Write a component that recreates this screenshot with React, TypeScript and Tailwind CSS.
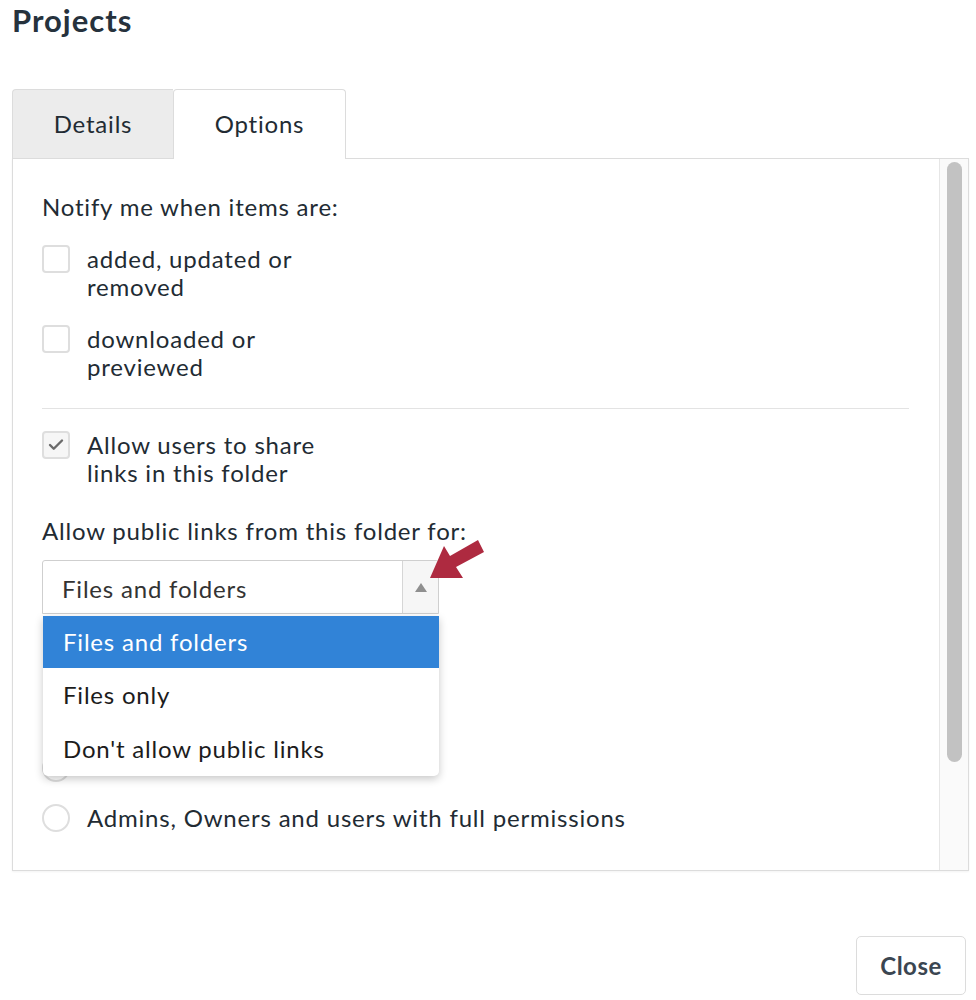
import { Check } from "lucide-react";

const Checkbox = ({ checked = false }: { checked?: boolean }) => (
  <div className={`w-[28px] h-[28px] shrink-0 rounded-[4px] border-2 border-[#dedede] flex items-center justify-center ${checked ? "bg-[#f6f6f6]" : "bg-white"}`}>
    {checked && <Check className="w-[18px] h-[18px] text-[#6b6b6b]" strokeWidth={3.2} />}
  </div>
);

const Radio = () => <div className="w-[28px] h-[28px] shrink-0 rounded-full border-2 border-[#dedede] bg-white" />;

const Row = ({ children, control }: any) => (
  <div className="flex items-start gap-[17px]">
    {control}
    <div>{children}</div>
  </div>
);

export default function App() {
  return (
    <div className="relative w-[976px] h-[1000px] bg-white text-[#222b33] font-['Lato','Open_Sans',sans-serif] tracking-[0.8px] overflow-hidden">
      <h1 className="pl-[12px] pt-[2px] text-[31px] leading-[36px] font-bold text-[#26323d] tracking-[1px]">Projects</h1>

      {/* tabs */}
      <div className="mt-[51px] ml-[12px] flex items-end">
        <div className="w-[161px] h-[69px] bg-[#ececec] border-l border-t border-[#dcdcdc] rounded-tl-[4px] flex items-center justify-center text-[24px]">
          Details
        </div>
        <div className="relative z-10 -mb-px w-[173px] h-[70px] bg-white border border-b-0 border-[#dcdcdc] rounded-t-[4px] flex items-center justify-center text-[24px] pb-px">
          Options
        </div>
      </div>

      {/* panel */}
      <div className="ml-[12px] w-[957px] h-[713px] border border-[#dcdcdc] flex shadow-[0_1px_2px_rgba(0,0,0,0.05)]">
        <div className="relative flex-1 overflow-hidden pl-[29px] pr-[30px] pt-[34px] text-[24px] leading-[28px]">
          <p>Notify me when items are:</p>
          <div className="mt-[24px] flex flex-col gap-[24px]">
            <Row control={<Checkbox />}>
              added, updated or<br />removed
            </Row>
            <Row control={<Checkbox />}>
              downloaded or<br />previewed
            </Row>
          </div>
          <div className="mt-[27px] h-px bg-[#e3e3e3]" />
          <div className="mt-[22px]">
            <Row control={<Checkbox checked />}>
              Allow users to share<br />links in this folder
            </Row>
          </div>
          <p className="mt-[30px]">Allow public links from this folder for:</p>

          <div className="mt-[15px] w-[397px] h-[54px] border border-[#cfcfcf] rounded-t-[3px] flex">
            <div className="flex-1 flex items-center pl-[19px] pt-[3px] text-[#333]">Files and folders</div>
            <div className="w-[36px] border-l border-[#d6d6d6] bg-[#f6f6f6] flex items-center justify-center">
              <div className="w-0 h-0 border-l-[6px] border-r-[6px] border-b-[9px] border-l-transparent border-r-transparent border-b-[#8f8f8f]" />
            </div>
          </div>

          <div className="mt-[140px] flex flex-col gap-[22px]">
            <Radio />
            <Row control={<Radio />}>Admins, Owners and users with full permissions</Row>
          </div>

          {/* open dropdown */}
          <div className="absolute left-[30px] top-[457px] w-[396px] bg-white rounded-b-[5px] shadow-[0_3px_8px_rgba(0,0,0,0.22)] overflow-hidden">
            <div className="h-[52px] bg-[#3183d7] text-white flex items-center pl-[20px]">Files and folders</div>
            <div className="h-[54px] flex items-center pl-[20px] text-[#1c1c1c]">Files only</div>
            <div className="h-[54px] flex items-center pl-[20px] text-[#1c1c1c]">Don't allow public links</div>
          </div>
        </div>

        {/* scrollbar */}
        <div className="w-[29px] border-l border-[#e6e6e6] bg-[#fafafa] pt-[3px] flex justify-center">
          <div className="w-[15px] h-[600px] rounded-full bg-[#c2c2c2]" />
        </div>
      </div>

      {/* red arrow */}
      <svg className="absolute left-[426px] top-[534px]" width="64" height="52" viewBox="0 0 64 52">
        <polygon points="4,44 18,12 24,22 52,6 58,18 30,33 37,44" fill="#ae2a40" />
      </svg>

      <div className="mt-[65px] mr-[10px] flex justify-end">
        <button className="w-[110px] h-[59px] border border-[#dcdcdc] rounded-[5px] bg-white text-[24px] font-bold text-[#3b4651] tracking-[0.5px]">
          Close
        </button>
      </div>
    </div>
  );
}
